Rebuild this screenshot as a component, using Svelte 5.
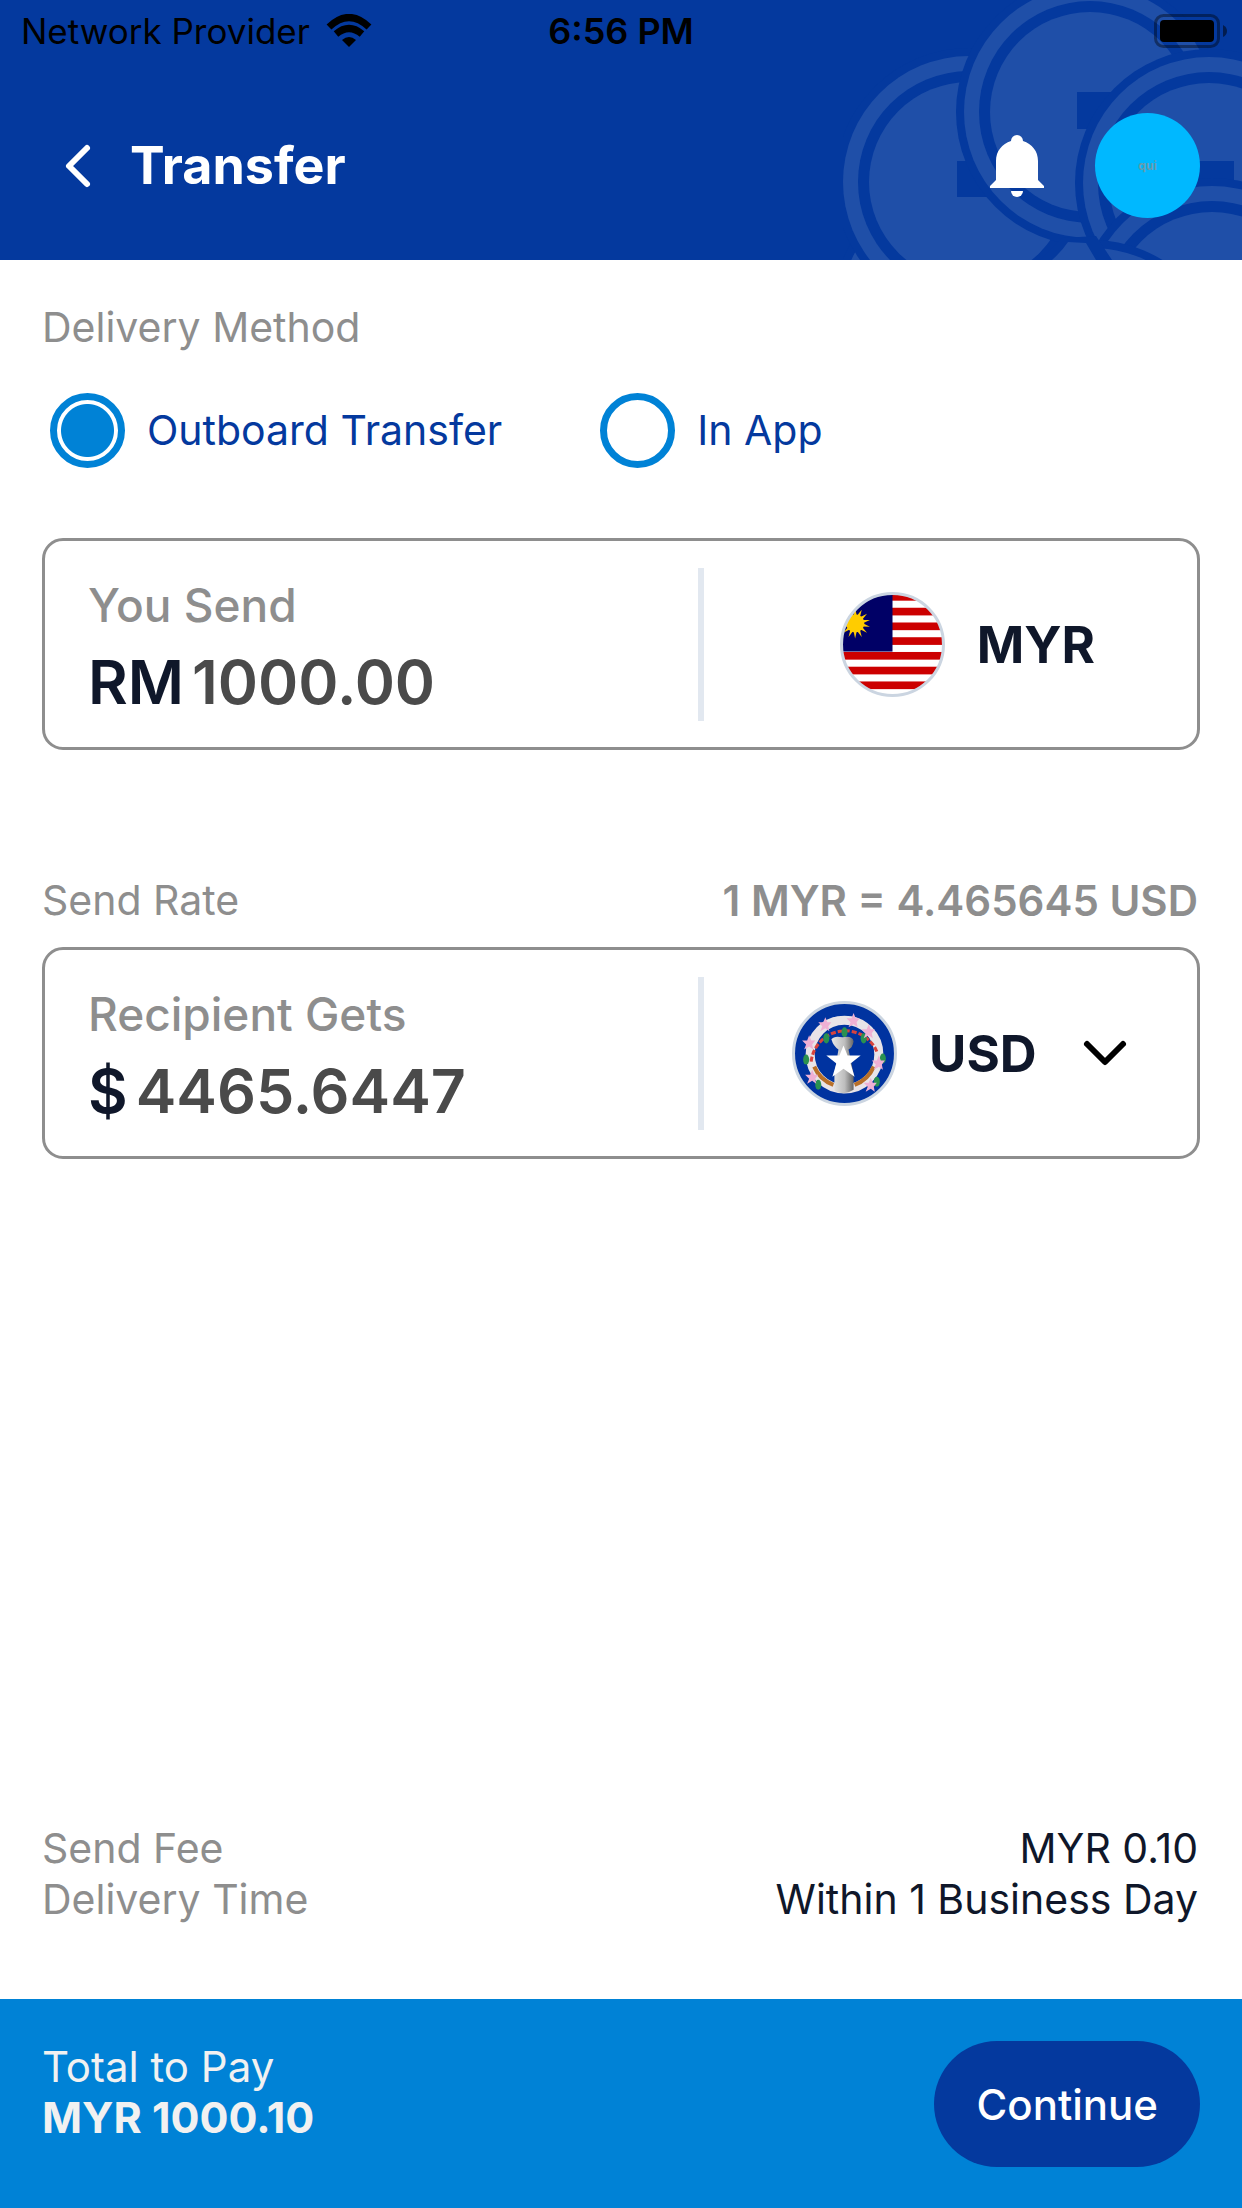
<script lang="ts">
    let delivery = $state("outboard");
    let sendAmount = $state("1000.00");
    let receiveAmount = $state("4465.6447");

    // each petal overlaps the one before it, notches sit between them
    const petals = [
        { x: 967, y: 310 },
        { x: 969, y: 182, notch: "M957 161H1010V197H957Z" },
        { x: 1090, y: 112, notch: "M1077 92H1140V129H1077Z" },
        { x: 1209, y: 183, notch: "M1180 161H1234V197H1180Z" },
        { x: 1212, y: 312 },
    ];

    // flowers and leaves round the wreath of the island flag
    const flowers = [[-19, -28], [9, -32], [24, -21], [-35, -10], [34, 10], [-32, 24], [26, 32]];
    const leaves = [[-38, 6], [-18, -15], [0, -21], [19, -15], [38, 5], [-26, 31], [32, 28]];

    const rays = Array.from({ length: 14 }, (_, i) => i * 360 / 14);
</script>

{#snippet petal(x: number, y: number)}
    <circle class="gap" cx={x} cy={y} r="134" />
    <circle class="fill" cx={x} cy={y} r="126" />
    <circle class="gap" cx={x} cy={y} r="111" />
    <circle class="fill" cx={x} cy={y} r="100" />
{/snippet}

<div class="screen">
    <header>
        <svg class="pattern" viewBox="843 0 399 260" aria-hidden="true">
            {#each petals as { x, y, notch }}
                {@render petal(x, y)}
                {#if notch}
                    <path class="gap" d={notch} />
                {/if}
            {/each}
            <clipPath id="lower"><rect x="1099" y="230" width="143" height="30" /></clipPath>
            <g clip-path="url(#lower)">
                {@render petal(1092, 374)}
            </g>
            <path class="gap" d="M1062 238L1096 236L1112 260H1040Z" />
            <path class="fill" d="M1052 260Q1062 251 1068 242L1086 243L1096 260Z" />
        </svg>

        <div class="status">
            <div class="carrier">
                <span>Network Provider</span>
                <svg width="46" height="34" viewBox="0 0 46 34" aria-hidden="true">
                    <path d="M23 33L16 26Q23 20 30 26Z" />
                    <path class="wave" d="M10 20Q23 9 36 20" />
                    <path class="wave" d="M3 13Q23 -6 43 13" />
                </svg>
            </div>
            <span class="clock">6:56 PM</span>
            <svg class="battery" width="74" height="34" viewBox="0 0 74 34" aria-hidden="true">
                <rect class="case" x="1.5" y="1.5" width="63" height="31" rx="8" />
                <rect x="6" y="6" width="54" height="22" rx="4" />
                <path class="nub" d="M69 11Q73 13 73 17Q73 21 69 23Z" />
            </svg>
        </div>

        <nav>
            <button class="back" aria-label="Back">
                <svg width="30" height="48" viewBox="0 0 30 48"><path d="M25 6L7 24L25 42" /></svg>
            </button>
            <h1>Transfer</h1>
            <button class="bell" aria-label="Notifications">
                <svg width="54" height="64" viewBox="0 0 54 64">
                    <path d="M21 7A6 6 0 0 1 33 7C42 10 48 17 48 27V46L54 52V54H0V52L6 46V27C6 17 12 10 21 7Z" />
                    <path d="M21 57H33A6 6 0 0 1 21 57Z" />
                </svg>
            </button>
            <button class="avatar">qui</button>
        </nav>
    </header>

    <main>
        <fieldset>
            <legend>Delivery Method</legend>
            <div class="options">
                <label><input type="radio" name="delivery" value="outboard" bind:group={delivery} />Outboard Transfer</label>
                <label><input type="radio" name="delivery" value="app" bind:group={delivery} />In App</label>
            </div>
        </fieldset>

        <section class="card">
            <div class="amount">
                <label for="send">You Send</label>
                <div class="value"><span>RM</span><input id="send" bind:value={sendAmount} /></div>
            </div>
            <div class="currency">
                <svg class="flag" viewBox="-52 -52 104 104" aria-hidden="true">
                    <clipPath id="round"><circle r="50" /></clipPath>
                    <g clip-path="url(#round)">
                        <rect x="-52" y="-52" width="104" height="104" fill="#fff" />
                        {#each [0, 1, 2, 3, 4, 5, 6] as i}
                            <rect x="-52" y={-51 + i * 14.6} width="104" height="7.6" fill="#cc0000" />
                        {/each}
                        <rect x="-52" y="-52" width="52" height="59" fill="#000066" />
                        <g fill="#ffcc00" transform="translate(-37 -21)">
                            <circle r="9" />
                            {#each rays as angle}
                                <path d="M-1.5 -8L0 -15L1.5 -8Z" transform="rotate({angle})" />
                            {/each}
                        </g>
                    </g>
                    <circle class="rim" r="50.5" />
                </svg>
                <span>MYR</span>
            </div>
        </section>

        <div class="rate">
            <span>Send Rate</span>
            <strong>1 MYR = 4.465645 USD</strong>
        </div>

        <section class="card">
            <div class="amount">
                <label for="receive">Recipient Gets</label>
                <div class="value"><span>$</span><input id="receive" bind:value={receiveAmount} /></div>
            </div>
            <button class="currency">
                <svg class="flag" viewBox="-52 -52 104 104" aria-hidden="true">
                    <defs>
                        <linearGradient id="stone">
                            <stop offset="0" stop-color="#e8e8e8" />
                            <stop offset="0.6" stop-color="#bdbdbd" />
                            <stop offset="1" stop-color="#666" />
                        </linearGradient>
                    </defs>
                    <circle r="51" fill="#0033a0" />
                    <circle cy="1" r="34" fill="none" stroke="#e8e4e8" stroke-width="9" />
                    <path d="M-33 8A34 34 0 0 1 32 -2" fill="none" stroke="#d8433c" stroke-width="3" stroke-dasharray="5 2" />
                    <path d="M-30 13A33 33 0 0 0 -11 31M29 13A33 33 0 0 1 10 31" fill="none" stroke="#b8702a" stroke-width="4" />
                    {#each leaves as [x, y]}
                        <ellipse cx={x} cy={y} rx="3" ry="5" fill="#2a9150" />
                    {/each}
                    {#each flowers as [x, y]}
                        <path d="M0 -8L2 -3L6 -3L3 1L4 6L0 3L-5 6L-3 1L-7 -3L-2 -3Z" transform="translate({x} {y})" fill="#efb0d4" />
                    {/each}
                    <path d="M-13 -14Q-10 -18 -2 -16Q8 -18 9 -12Q8 -6 4 -4L9 20L9 36Q0 42 -10 37L-10 20L-6 -4Q-11 -7 -13 -14Z" fill="url(#stone)" />
                    <path d="M-1 -8L3 2H16L6 10L10 23L-1 15L-12 23L-8 10L-18 2H-5Z" fill="#fff" />
                    <circle class="rim" r="50.5" />
                </svg>
                <span>USD</span>
                <svg class="chevron" width="48" height="30" viewBox="0 0 48 30"><path d="M6 6L24 24L42 6" /></svg>
            </button>
        </section>

        <dl>
            <div><dt>Send Fee</dt><dd>MYR 0.10</dd></div>
            <div><dt>Delivery Time</dt><dd>Within 1 Business Day</dd></div>
        </dl>
    </main>

    <footer>
        <p>Total to Pay<strong>MYR 1000.10</strong></p>
        <button>Continue</button>
    </footer>
</div>

<style>
    :global(body) {
        margin: 0;
    }

    .screen {
        min-height: 100vh;

        display: flex;
        flex-direction: column;

        background: #fff;
        color: #0f172a;
        font-family: Inter, "Liberation Sans", sans-serif;
        font-size: 41px;
        line-height: 51px;
    }

    button, input {
        margin: 0;
        padding: 0;
        border: 0;
        background: none;
        color: inherit;
        font: inherit;
    }

    header {
        position: relative;
        height: 260px;
        overflow: hidden;
        background: #04399e;
    }

    .pattern {
        position: absolute;
        top: 0;
        right: 0;
        height: 260px;
    }

    .fill {
        fill: #1f4fa8;
    }

    .gap {
        fill: #04399e;
    }

    .status {
        position: relative;
        padding: 8px 14px 0;

        display: grid;
        grid-template-columns: 1fr auto 1fr;
        align-items: center;

        color: #000;
        font-size: 35px;
        line-height: 46px;
    }

    .carrier {
        padding-left: 7px;

        display: flex;
        align-items: center;
        gap: 16px;
    }

    .wave {
        fill: none;
        stroke: #000;
        stroke-width: 7px;
    }

    .clock {
        font-size: 36px;
        font-weight: 600;
    }

    .battery {
        justify-self: end;
    }

    .case {
        fill: none;
        stroke: #000;
        stroke-width: 3px;
        opacity: 0.4;
    }

    .nub {
        opacity: 0.5;
    }

    nav {
        position: relative;
        padding: 59px 42px 0 62px;

        display: flex;
        align-items: center;
    }

    nav svg {
        display: block;
    }

    .back path {
        fill: none;
        stroke: #fff;
        stroke-width: 6px;
        stroke-linecap: round;
        stroke-linejoin: round;
    }

    h1 {
        flex: 1;
        margin: 0 0 0 38px;
        color: #fff;
        font-size: 52px;
        font-weight: 700;
    }

    .bell {
        margin-right: 51px;
        fill: #fff;
    }

    .avatar {
        width: 105px;
        height: 105px;
        border-radius: 50%;
        background: #00b8ff;
        color: #6a9cac;
        font-size: 12px;
        font-weight: 700;
    }

    main {
        flex: 1;
        padding: 42px 42px 74px;

        display: flex;
        flex-direction: column;
    }

    fieldset {
        margin: 0;
        padding: 0;
        border: 0;
    }

    legend, .rate, dt {
        padding: 0;
        color: #8e8e8e;
    }

    .options {
        padding: 40px 8px 0;

        display: flex;
        gap: 98px;

        color: #04399e;
    }

    .options label {
        display: flex;
        align-items: center;
        gap: 22px;
    }

    .options input {
        appearance: none;
        width: 75px;
        height: 75px;
        border: 7px solid #0082d6;
        border-radius: 50%;
    }

    .options input:checked {
        background: radial-gradient(circle, #0082d6 26px, #fff 27px);
    }

    .card {
        height: 206px;
        margin-top: 70px;
        border: 3px solid #8e8e8e;
        border-radius: 21px;

        display: grid;
        grid-template-columns: 17fr 13fr;
        align-items: center;
    }

    .amount {
        min-width: 0;
        padding: 15px 0 0 43px;
        color: #8e8e8e;
        font-size: 46px;
        font-weight: 500;
        line-height: 60px;
    }

    .amount label {
        display: block;
    }

    .value {
        display: flex;
        align-items: center;
        gap: 8px;
        height: 94px;

        color: #0f172a;
        font-size: 61px;
        font-weight: 600;
    }

    .value input {
        flex: 1;
        min-width: 0;
        color: #4a4a4a;
    }

    .currency {
        height: 153px;
        padding-left: 34px;
        border-left: 6px solid #e2e8f0;

        display: flex;
        align-items: center;
        justify-content: center;
        gap: 32px;

        font-size: 51px;
        font-weight: 700;
    }

    button.currency {
        padding-left: 20px;
    }

    .flag {
        width: 105px;
        height: 105px;
    }

    .rim {
        fill: none;
        stroke: #cbd5e1;
        stroke-width: 3px;
    }

    .chevron {
        margin-left: 12px;
    }

    .chevron path {
        fill: none;
        stroke: #000;
        stroke-width: 6px;
        stroke-linecap: round;
        stroke-linejoin: round;
    }

    .rate {
        margin-top: 125px;
        padding-right: 2px;

        display: flex;
        justify-content: space-between;
    }

    .rate strong {
        font-size: 42px;
        font-weight: 600;
    }

    .rate + .card {
        margin-top: 21px;
    }

    dl {
        margin: auto 0 0;
    }

    dl div {
        padding-right: 2px;

        display: flex;
        justify-content: space-between;
    }

    dd {
        margin: 0;
    }

    footer {
        padding: 42px 42px 41px;

        display: flex;
        align-items: flex-start;
        justify-content: space-between;

        background: #0082d6;
        color: #f1f1f1;
        font-size: 42px;
    }

    footer p {
        margin: 0;
    }

    footer strong {
        display: block;
        font-size: 43px;
        font-weight: 700;
    }

    footer button {
        height: 126px;
        padding: 0 42px;
        border-radius: 63px;
        background: #04399e;
        color: #fff;
        font-weight: 500;
    }
</style>
